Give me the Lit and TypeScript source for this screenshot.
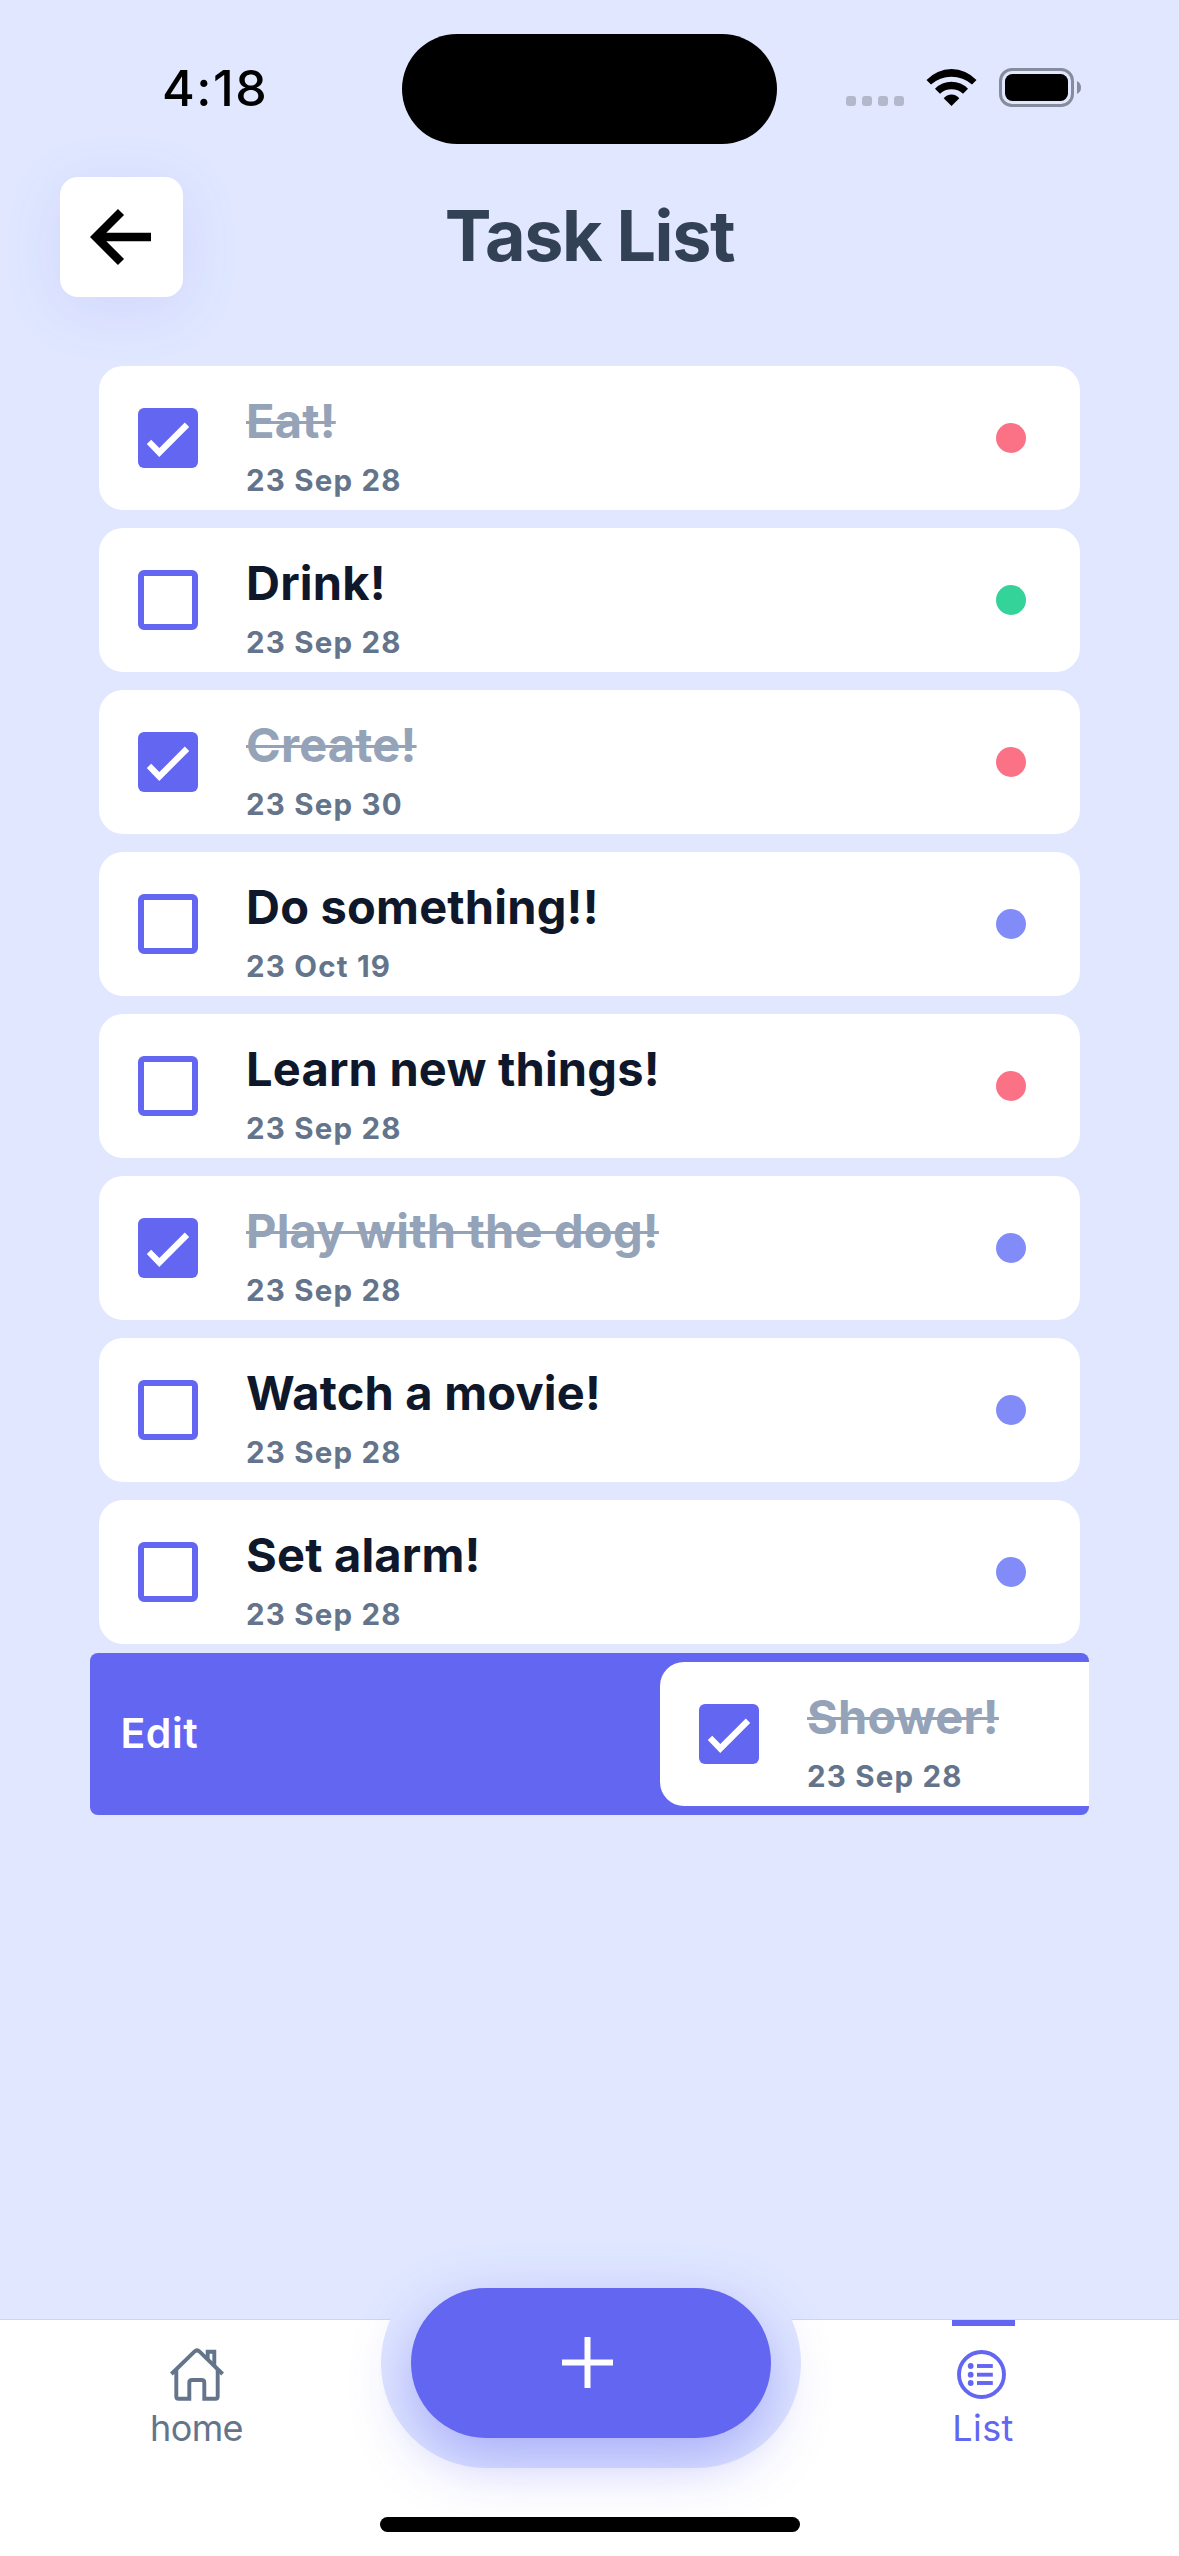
import { LitElement, html, css, svg } from "lit";
import { customElement, property } from "lit/decorators.js";
import { classMap } from "lit/directives/class-map.js";

type Priority = "high" | "medium" | "low";

interface Task {
  title: string;
  date: string;
  done: boolean;
  priority: Priority;
}

const TASKS: Task[] = [
  { title: "Eat!", date: "23 Sep 28", done: true, priority: "high" },
  { title: "Drink!", date: "23 Sep 28", done: false, priority: "low" },
  { title: "Create!", date: "23 Sep 30", done: true, priority: "high" },
  { title: "Do something!!", date: "23 Oct 19", done: false, priority: "medium" },
  { title: "Learn new things!", date: "23 Sep 28", done: false, priority: "high" },
  { title: "Play with the dog!", date: "23 Sep 28", done: true, priority: "medium" },
  { title: "Watch a movie!", date: "23 Sep 28", done: false, priority: "medium" },
  { title: "Set alarm!", date: "23 Sep 28", done: false, priority: "medium" },
];

const SWIPED: Task = { title: "Shower!", date: "23 Sep 28", done: true, priority: "medium" };

@customElement("status-bar")
class StatusBar extends LitElement {
  static styles = css`
    :host {
      display: grid;
      grid-template-columns: 402px 375px 1fr;
      height: 177px;
      align-items: start;
    }
    .time {
      padding: 58px 0 0 162px;
      font-size: 50px;
      line-height: 60px;
      font-weight: 550;
      letter-spacing: 1.5px;
      color: #000;
    }
    .island {
      margin-top: 34px;
      height: 110px;
      border-radius: 55px;
      background: #000;
    }
    .signals {
      display: flex;
      padding: 68px 0 0 69px;
    }
    .dots {
      display: flex;
      gap: 6px;
      padding-top: 28px;
    }
    .dot {
      width: 10px;
      height: 10px;
      border-radius: 3px;
      background: #b3b8cd;
    }
    .wifi {
      margin: 1px 22px 0 22px;
    }
    svg {
      display: block;
    }
  `;
  render() {
    return html`
      <div class="time">4:18</div>
      <div class="island"></div>
      <div class="signals">
        <div class="dots">
          ${[0, 1, 2, 3].map(() => html`<span class="dot"></span>`)}
        </div>
        <svg class="wifi" width="51" height="38" viewBox="0 0 51 38">
          <path d="M.5 11A34 34 0 0 1 50.5 11L46 15.4A31 31 0 0 0 5 15.4Z" />
          <path d="M9 19.7A23 23 0 0 1 42 19.7L37 24.7A17 17 0 0 0 14 24.7Z" />
          <path d="M17.7 29.3A9.8 9.8 0 0 1 33.3 29.3L25.5 37Z" />
        </svg>
        <svg width="83" height="39" viewBox="0 0 83 39">
          <rect x="1.5" y="1.5" width="72" height="36" rx="11.5" fill="none" stroke="#878c9c" stroke-width="3" />
          <rect x="6" y="6" width="63" height="27" rx="7.5" />
          <path d="M78 13Q82 15 82 19.5T78 26Z" fill="#878c9c" />
        </svg>
      </div>
    `;
  }
}

@customElement("task-card")
class TaskCard extends LitElement {
  @property({ attribute: false }) task!: Task;
  static styles = css`
    :host {
      display: block;
    }
    .card {
      display: flex;
      height: 144px;
      box-sizing: border-box;
      padding: 0 54px 0 39px;
      border-radius: 24px;
      background: #fff;
    }
    .box {
      width: 60px;
      height: 60px;
      box-sizing: border-box;
      margin: 42px 48px 0 0;
      border: 6px solid #6366f1;
      border-radius: 6px;
      flex: none;
    }
    .box.checked {
      border: 0;
      background: #6366f1;
    }
    .box svg {
      display: block;
    }
    .text {
      flex: 1;
      padding-top: 25px;
      white-space: nowrap;
    }
    .title {
      width: max-content;
      font-size: 47px;
      line-height: 60px;
      font-weight: 700;
      letter-spacing: 0.2px;
      color: #0f172a;
    }
    .title.done {
      color: #94a3b8;
      text-decoration: line-through;
      text-decoration-thickness: 3px;
    }
    .date {
      margin-top: 9px;
      font-size: 29.5px;
      line-height: 40px;
      font-weight: 650;
      letter-spacing: 1.2px;
      color: #64748b;
    }
    .mark {
      width: 30px;
      height: 30px;
      margin-top: 57px;
      border-radius: 50%;
      flex: none;
    }
    .high {
      background: #fb7185;
    }
    .low {
      background: #34d399;
    }
    .medium {
      background: #818cf8;
    }
  `;
  render() {
    const t = this.task;
    return html`
      <div class="card">
        <div class=${classMap({ box: true, checked: t.done })}>
          ${t.done
            ? html`<svg width="60" height="60" viewBox="0 0 60 60">
                <path d="M11 33.8L21.3 44.5L49 16.8" fill="none" stroke="#fff" stroke-width="6.2" />
              </svg>`
            : ""}
        </div>
        <div class="text">
          <div class=${classMap({ title: true, done: t.done })}>${t.title}</div>
          <div class="date">${t.date}</div>
        </div>
        <span class="mark ${t.priority}"></span>
      </div>
    `;
  }
}

@customElement("tab-bar")
class TabBar extends LitElement {
  static styles = css`
    :host {
      display: grid;
      grid-template-columns: 1fr 1fr 1fr;
      grid-template-rows: 197px 1fr;
      position: relative;
      height: 237px;
      box-sizing: border-box;
      border-top: 1px solid #d3d6e2;
      background: #fff;
    }
    .tab {
      display: flex;
      flex-direction: column;
      align-items: center;
      font-size: 36px;
      line-height: 44px;
      color: #64748b;
    }
    .tab svg {
      display: block;
      fill: none;
      stroke: currentColor;
      stroke-width: 3.9;
    }
    .home svg {
      margin: 28px 0 4px;
    }
    .home .label {
      letter-spacing: -0.6px;
    }
    .tab.active {
      color: #6366f1;
    }
    .bar {
      width: 63px;
      height: 6px;
      margin-left: 2px;
      background: #6366f1;
    }
    .active svg {
      margin: 24px 2px 7px 0;
    }
    .active .label {
      padding-left: 1px;
      letter-spacing: 0.4px;
    }
    .fab {
      position: absolute;
      left: 381px;
      top: -62px;
      width: 420px;
      height: 210px;
      box-sizing: border-box;
      padding: 30px;
      border-radius: 105px;
      background: #e0e7ff;
    }
    .button {
      display: grid;
      place-items: center;
      height: 150px;
      padding: 0 8px 2px 0;
      box-sizing: border-box;
      border-radius: 75px;
      background: #6366f1;
      box-shadow: 0 21px 60px rgba(99, 102, 241, 0.45);
    }
    .indicator {
      grid-column: 1 / -1;
      justify-self: center;
      width: 420px;
      height: 15px;
      border-radius: 8px;
      background: #000;
      position: relative;
    }
  `;
  render() {
    return html`
      <div class="tab home">
        <svg width="54" height="54" viewBox="0 0 54 54">
          <path d="M1.4 26L24.4 3.6Q27 1.2 29.6 3.6L52.6 26" />
          <path d="M6.3 21V48.5Q6.3 50.8 8.6 50.8H19.3V34.6Q19.3 32 22 32H31.6Q34.3 32 34.3 34.6V50.8H45.4Q47.7 50.8 47.7 48.5V21" />
          <path d="M37.7 11.5V3.8H44.3V18" />
        </svg>
        <span class="label">home</span>
      </div>
      <div></div>
      <div class="tab active">
        <div class="bar"></div>
        <svg width="49" height="49" viewBox="0 0 49 49">
          <circle cx="24.5" cy="24.5" r="22.5" />
          ${[16, 24.7, 33].map(
            (y) => svg`
              <circle cx="13.7" cy=${y} r="2.9" fill="currentColor" stroke="none" />
              <path d="M20 ${y}H35.8" />`,
          )}
        </svg>
        <span class="label">List</span>
      </div>
      <div class="fab">
        <div class="button">
          <svg width="51" height="51" viewBox="0 0 51 51">
            <path d="M25.5 0V51M0 25.5H51" stroke="#fff" stroke-width="6" />
          </svg>
        </div>
      </div>
      <div class="indicator"></div>
    `;
  }
}

@customElement("app-root")
class AppRoot extends LitElement {
  static styles = css`
    :host {
      display: flex;
      flex-direction: column;
      width: 1179px;
      height: 2556px;
      overflow: hidden;
      background: #e0e7ff;
      font-family: Inter, "Liberation Sans", sans-serif;
    }
    .header {
      display: grid;
      grid-template-columns: 123px 1fr 123px;
      padding: 0 60px;
      height: 120px;
      flex: none;
    }
    .back {
      display: grid;
      place-items: center;
      padding-right: 1px;
      border-radius: 18px;
      background: #fff;
      box-shadow: 0 12px 60px rgba(99, 102, 241, 0.12);
    }
    .heading {
      margin: 0;
      text-align: center;
      font-size: 70px;
      line-height: 117px;
      font-weight: 700;
      letter-spacing: -1.4px;
      color: #334155;
    }
    .list {
      display: flex;
      flex-direction: column;
      gap: 18px;
      padding: 69px 99px 0;
      flex: 1;
    }
    .swiped {
      display: grid;
      grid-template-columns: 570px 981px;
      height: 162px;
      box-sizing: border-box;
      margin: -9px -9px 0;
      padding: 9px 0;
      border-radius: 8px;
      background: #6366f1;
      overflow: hidden;
    }
    .edit {
      padding-left: 30.5px;
      font-size: 41px;
      line-height: 142px;
      font-weight: 600;
      letter-spacing: 0.5px;
      color: #fff;
    }
  `;
  render() {
    return html`
      <status-bar></status-bar>
      <div class="header">
        <div class="back">
          <svg width="63" height="60" viewBox="0 0 63 60">
            <path d="M31 5L6 30L31 55M6 30H61" fill="none" stroke="#000" stroke-width="8.6" />
          </svg>
        </div>
        <h1 class="heading">Task List</h1>
      </div>
      <div class="list">
        ${TASKS.map((t) => html`<task-card .task=${t}></task-card>`)}
        <div class="swiped">
          <span class="edit">Edit</span>
          <task-card .task=${SWIPED}></task-card>
        </div>
      </div>
      <tab-bar></tab-bar>
    `;
  }
}
